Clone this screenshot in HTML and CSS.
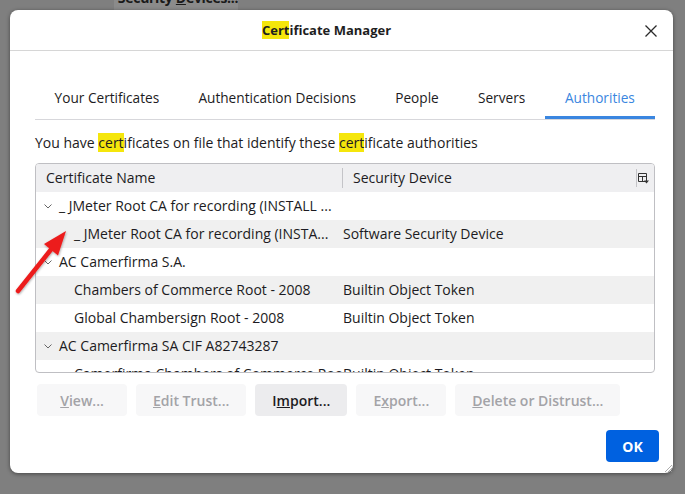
FILE: index.html
```html
<!DOCTYPE html>
<html>
<head>
<meta charset="utf-8">
<link rel="stylesheet" href="styles.css">
</head>
<body>
<div class="behind"><span class="behind-label">Security <u>D</u>evices...</span></div>
<div class="dialog">
  <div class="titlebar">
    <div class="title"><mark>Cert</mark>ificate Manager</div>
    <button class="close" aria-label="Close">
      <svg width="12" height="12" viewBox="0 0 12 12"><path d="M0.5 0.5L11.5 11.5M11.5 0.5L0.5 11.5" stroke="#2a2a2a" stroke-width="1.3" fill="none"/></svg>
    </button>
  </div>
  <div class="content">
    <div class="tabs">
      <div class="tab">Your Certificates</div>
      <div class="tab">Authentication Decisions</div>
      <div class="tab">People</div>
      <div class="tab">Servers</div>
      <div class="tab active">Authorities</div>
    </div>
    <p class="desc">You have <mark>cert</mark>ificates on file that identify these <mark>cert</mark>ificate authorities</p>
    <div class="tree">
      <div class="thead">
        <div class="th th-name">Certificate Name</div>
        <div class="th th-dev">Security Device</div>
        <div class="th-picker">
          <svg width="11" height="11" viewBox="0 0 11 11"><path d="M0.5 0.5H8.5V8.5H0.5ZM0.5 3.5H8.5M4.5 3.5V8.5" stroke="#333" fill="none"/><path d="M6 7.5H11L8.5 10.5Z" fill="#333"/></svg>
        </div>
      </div>
      <div class="rows">
        <div class="row"><div class="cell name group"><svg class="chev" width="8" height="5" viewBox="0 0 8 5"><path d="M0.5 0.5L4 4L7.5 0.5" stroke="#666" fill="none"/></svg>_ JMeter Root CA for recording (INSTALL ...</div><div class="cell dev"></div></div>
        <div class="row alt"><div class="cell name child">_ JMeter Root CA for recording (INSTA...</div><div class="cell dev">Software Security Device</div></div>
        <div class="row"><div class="cell name group"><svg class="chev" width="8" height="5" viewBox="0 0 8 5"><path d="M0.5 0.5L4 4L7.5 0.5" stroke="#666" fill="none"/></svg>AC Camerfirma S.A.</div><div class="cell dev"></div></div>
        <div class="row alt"><div class="cell name child">Chambers of Commerce Root - 2008</div><div class="cell dev">Builtin Object Token</div></div>
        <div class="row"><div class="cell name child">Global Chambersign Root - 2008</div><div class="cell dev">Builtin Object Token</div></div>
        <div class="row alt"><div class="cell name group"><svg class="chev" width="8" height="5" viewBox="0 0 8 5"><path d="M0.5 0.5L4 4L7.5 0.5" stroke="#666" fill="none"/></svg>AC Camerfirma SA CIF A82743287</div><div class="cell dev"></div></div>
        <div class="row"><div class="cell name child">Camerfirma Chambers of Commerce Root</div><div class="cell dev">Builtin Object Token</div></div>
      </div>
    </div>
    <div class="actions">
      <button class="btn" disabled><u>V</u>iew...</button>
      <button class="btn" disabled><u>E</u>dit Trust...</button>
      <button class="btn enabled">I<u>m</u>port...</button>
      <button class="btn" disabled>E<u>x</u>port...</button>
      <button class="btn" disabled><u>D</u>elete or Distrust...</button>
    </div>
    <div class="footer">
      <button class="ok">OK</button>
    </div>
  </div>
  <svg class="grip" width="8" height="8" viewBox="0 0 8 8"><path d="M8 1L1 8M8 4L4 8M8 7L7 8" stroke="#999" stroke-width="0.8"/></svg>
</div>
<svg class="arrow" width="90" height="120" viewBox="0 0 90 120">
  <defs><filter id="sh" x="-30%" y="-30%" width="160%" height="160%"><feDropShadow dx="0.5" dy="1" stdDeviation="1" flood-color="#000" flood-opacity="0.35"/></filter></defs>
  <g filter="url(#sh)">
    <line x1="18" y1="101" x2="53" y2="57" stroke="#ec1c1c" stroke-width="4.5" stroke-linecap="round"/>
    <path d="M66 41L44 54.1L58 65.4Z" fill="#ec1c1c"/>
  </g>
</svg>
</body>
</html>
```

FILE: styles.css
```css
* { box-sizing: border-box; }
html, body { margin: 0; padding: 0; }
body {
  width: 685px;
  height: 494px;
  overflow: hidden;
  background: #7f7f7f;
  font-family: "Open Sans", "Noto Sans", sans-serif;
  font-size: 14px;
  color: #1c1b22;
  position: relative;
}
mark { background: #f5e60c; color: inherit; }
.behind {
  margin-left: 114px;
  width: 124px;
  height: 10px;
  background: #8b8b8b;
  overflow: hidden;
  display: flex;
  align-items: flex-start;
  justify-content: center;
}
.behind-label {
  font-weight: 700;
  font-size: 14px;
  line-height: 14px;
  letter-spacing: -0.3px;
  color: #1a1a1a;
  margin-top: -9px;
  margin-left: 4px;
  white-space: nowrap;
}
.dialog {
  margin-left: 10px;
  width: 663px;
  height: 463px;
  background: #fff;
  border-radius: 8px;
  box-shadow: 0 1px 4px rgba(0,0,0,0.45);
  position: relative;
  display: flex;
  flex-direction: column;
}
.titlebar {
  height: 41px;
  border-bottom: 1px solid #d6d6d6;
  display: flex;
  align-items: center;
  justify-content: center;
  padding-right: 30px;
  position: relative;
}
.title { font-weight: 700; font-size: 13px; color: #1e1e1e; margin-top: -1px; }
.close {
  position: absolute;
  right: 16px;
  top: 15px;
  width: 12px;
  height: 12px;
  padding: 0;
  border: 0;
  background: none;
  display: flex;
  align-items: center;
  justify-content: center;
}
.content {
  flex: 1;
  padding: 27px 18px 0 25px;
  display: flex;
  flex-direction: column;
}
.tabs {
  display: flex;
  border-bottom: 1px solid #d7d7db;
  font-size: 13.65px;
}
.tab {
  padding: 10px 19.6px 8px;
  line-height: 20px;
  border-bottom: 3px solid transparent;
  color: #1c1b22;
  white-space: nowrap;
}
.tab.active {
  color: #3a86e0;
  border-bottom-color: #3a86e0;
  flex: 1;
  text-align: center;
}
.desc {
  margin: 13px 0 0;
  line-height: 20px;
}
.tree {
  margin-top: 10px;
  border: 1px solid #bfbfc3;
  border-radius: 4px;
  height: 210px;
  overflow: hidden;
  display: flex;
  flex-direction: column;
}
.thead {
  height: 28px;
  flex: none;
  background: #efeff1;
  display: flex;
  align-items: center;
}
.th { line-height: 20px; white-space: nowrap; }
.th-name { width: 306px; padding-left: 10px; }
.th-dev {
  flex: 1;
  padding-left: 10px;
  border-left: 1px solid #c4c4c8;
}
.th-picker {
  width: 16px;
  height: 18px;
  border-left: 1px solid #c4c4c8;
  display: flex;
  align-items: center;
  justify-content: flex-end;
  padding-right: 3px;
  margin-right: 2px;
}
.rows { flex: 1; }
.row {
  height: 28px;
  display: flex;
  align-items: center;
  white-space: nowrap;
}
.row.alt { background: #f0f0f0; }
.cell { line-height: 20px; overflow: hidden; }
.name { width: 307px; display: flex; align-items: center; }
.name.group { padding-left: 8px; }
.name.group .chev { margin-right: 7px; }
.name.child { padding-left: 38px; }
.dev { flex: 1; padding-left: 0; }
.actions {
  margin-top: 11px;
  padding-left: 2px;
  display: flex;
  gap: 9px;
}
.btn {
  height: 32px;
  min-width: 90px;
  padding: 0 17px;
  border: 0;
  border-radius: 4px;
  font-family: inherit;
  font-size: 14px;
  font-weight: 600;
  background: #f7f7f8;
  color: #a3a3a7;
}
.btn.enabled { background: #ececee; color: #1c1b22; }
.footer {
  margin-top: 14px;
  display: flex;
  justify-content: flex-end;
  margin-right: -4px;
}
.ok {
  width: 53px;
  height: 32px;
  border: 0;
  border-radius: 4px;
  background: #0061e0;
  color: #fff;
  font-family: inherit;
  font-size: 14px;
  font-weight: 700;
}
.grip { position: absolute; right: 1px; bottom: 1px; }
.arrow { position: absolute; left: 0; top: 190px; overflow: visible; }
```
